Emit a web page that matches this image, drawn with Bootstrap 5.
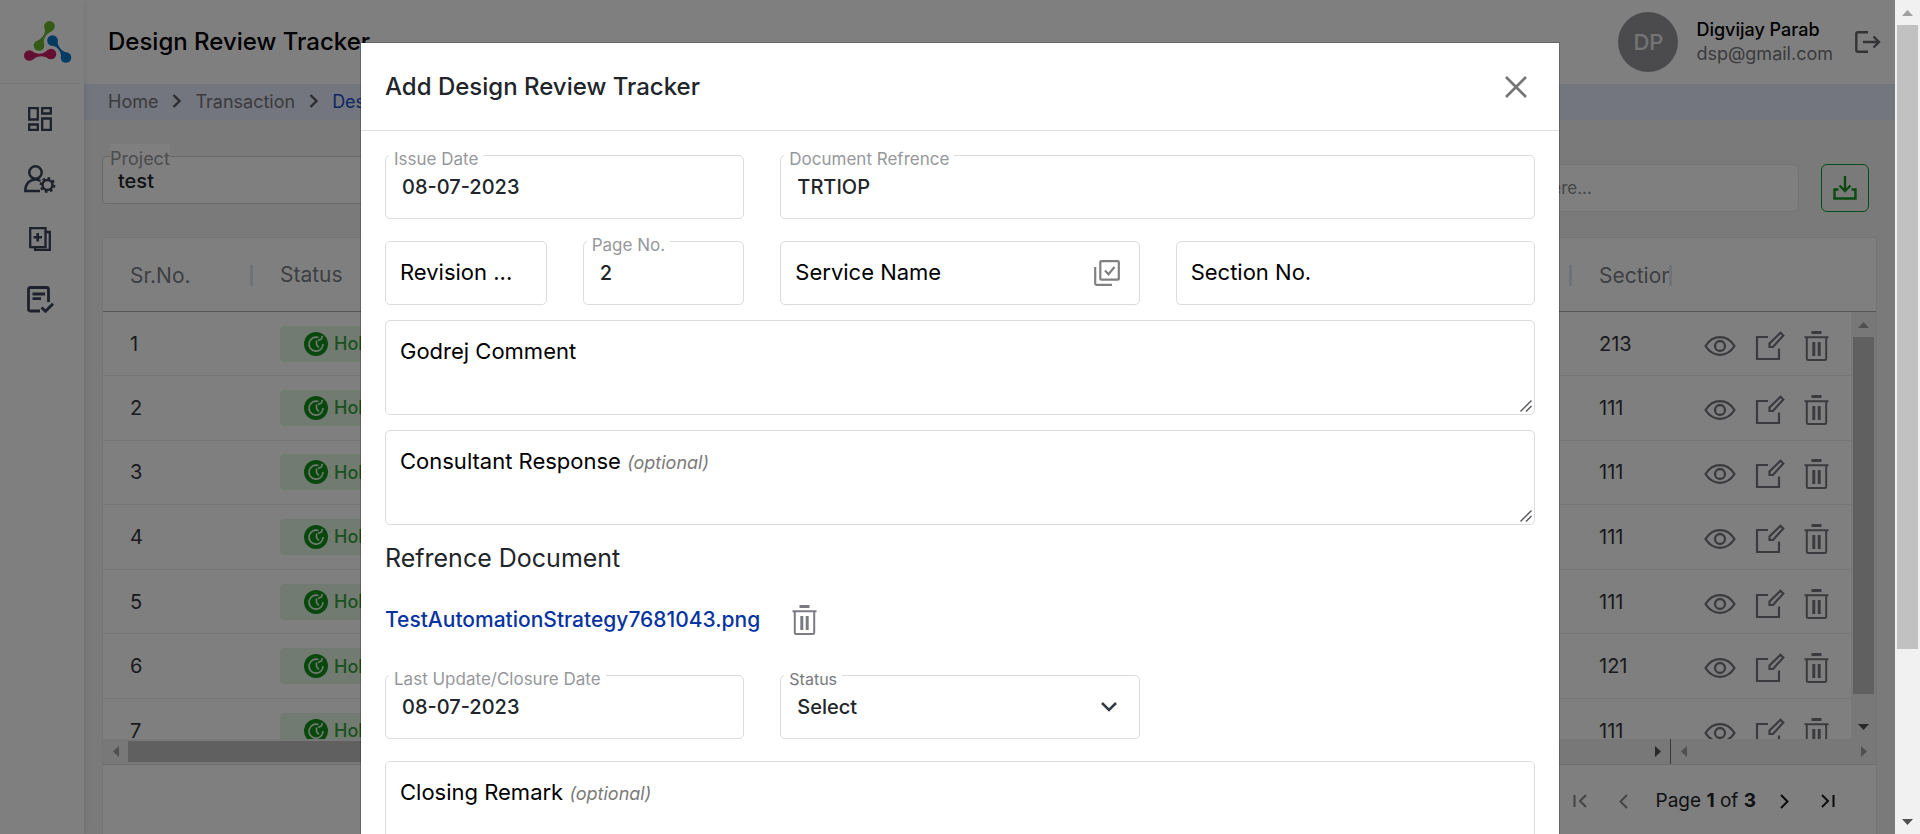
<!DOCTYPE html>
<html lang="en">
<head>
<meta charset="utf-8">
<meta name="viewport" content="width=device-width, initial-scale=1">
<title>Design Review Tracker</title>
<link href="https://cdn.jsdelivr.net/npm/bootstrap@5.3.0/dist/css/bootstrap.min.css" rel="stylesheet">
<style>
  body { font-family: Inter, "Open Sans", sans-serif; font-size: 20px; color: #212529; background: #f4f4f4; }
  svg { display: block; flex: none; }
  .icon-btn { border: 0; background: none; padding: 0; color: inherit; display: block; }

  /* sidebar */
  .side { width: 84px; background: #fff; color: #3b4256; box-shadow: 0 0 6px rgba(0,0,0,.12); z-index: 1; }
  .side-logo { width: 80px; height: 84px; padding: 21px 0 0 24px; border-bottom: 1px solid #ececec; }
  .side-nav { padding-top: 5px; }
  .side-link { height: 60px; width: 80px; color: inherit; }

  /* top bar */
  .topbar { height: 84px; background: #fff; padding: 0 14px 0 24px; }
  .page-title { font-size: 24px; font-weight: 500; color: #000; }
  .avatar { width: 60px; height: 60px; margin-right: 18px; background: #97979b; color: #e8e8ea; font-size: 22px; font-weight: 500; }
  .user-info { margin-right: 22px; }
  .user-name { font-size: 18px; line-height: 24px; font-weight: 500; color: #000; }
  .user-mail { font-size: 18px; line-height: 24px; color: #77777b; }
  .crumbs { height: 36px; background: #e6ebff; padding: 0 24px 2px; font-size: 18px; gap: 14px; color: #76767a; }
  .crumbs a { color: inherit; text-decoration: none; }
  .crumbs .current { color: #1c4fc4; }

  /* filter row */
  .tools { padding: 36px 26px 25px 18px; }
  .project { width: 360px; }
  .project select { height: 48px; font-size: 20px; border: 1px solid #d0d0d0; padding: 2px 15px 0; font-weight: 500; border-radius: 4px; }
  .project label { position: absolute; left: 8px; top: -12px; background: #fff; font-size: 18px; line-height: 30px; color: #98989c; }
  .search { width: 360px; height: 48px; font-size: 17px; border: 1px solid #e8e8e8; border-radius: 6px; padding-left: 40px; }
  .search::placeholder { color: #8c8c90; }
  .btn-export { width: 48px; height: 48px; margin-left: 22px; border: 1px solid #0b9a3c; border-radius: 6px; color: #14941d; background: none; }

  /* grid card */
  .grid-card { margin: 0 18px; background: #fff; border: 1px solid #e8e8e8; }
  .grid-table { table-layout: fixed; width: 100%; margin: 0; border-collapse: collapse; }
  .grid-head { height: 74px; border-bottom: 1px solid #aeaeb2; }
  .grid-head th { height: 74px; padding: 0 0 0 27px; font-size: 21px; font-weight: 400; color: #7d7f86; white-space: nowrap; }
  .head-cell { border-right: 3px solid #dfe5f0; line-height: 21px; overflow: hidden; }
  .grid-body { height: 427px; overflow: hidden; }
  .grid-rows { height: 645px; }
  .grid-rows td { padding: 0 0 0 27px; border-bottom: 1px solid #ececec; color: #34343a; }
  .state { display: flex; width: 140px; height: 36px; background: #e2f6e2; border-radius: 4px; color: #35a33a; font-size: 18px; font-weight: 500; padding-left: 24px; gap: 6px; }
  .row-actions { color: #77777e; gap: 19px; padding: 4px 0 0 5px; }
  .sb-v { width: 25px; background: #f1f1f1; padding: 0 2px; }
  .sb-h { height: 25px; background: #f1f1f1; border-bottom: 1px solid #dcdcdc; box-sizing: content-box; }
  .thumb { background: #c1c1c1; }
  .arrow-box { height: 25px; width: 25px; display: flex; align-items: center; justify-content: center; flex: none; }
  .pager { height: 72px; padding-right: 41px; font-size: 19px; }

  /* window scrollbar */
  .win-sb { width: 25px; background: #f1f1f1; }
  .win-sb .thumb { width: 21px; height: 624px; }

  /* dialog */
  .dim { position: absolute; inset: 0; background: rgba(0,0,0,.5); z-index: 5; }
  .modal { overflow: hidden; z-index: 10; }
  .modal-dialog { max-width: 1200px; margin: 42px auto 0; }
  .modal-content { border-radius: 0; border: 1px solid rgba(0,0,0,.2); background-clip: padding-box; }
  .modal-header { height: 88px; padding: 0 31px 0 24px; border-color: #dee2e6; border-radius: 0; }
  .modal-title { font-size: 24px; font-weight: 500; }
  .modal-body { padding: 24px; }
  .modal-body .row { --bs-gutter-x: 36px; margin-bottom: 22px; }
  .modal-body .gap-area { margin-bottom: 15px; }
  .field { position: relative; }
  .field .form-control, .field .form-select { height: 64px; border: 1px solid #dcdcde; border-radius: 5px; font-size: 20px; font-weight: 500; padding: 0 16px; color: #212529; background-color: #fff; }
  .field textarea.form-control { height: 95px; padding: 16px; resize: none; display: block; }
  .field .form-select { background-image: none; }
  .field label { position: absolute; background: #fff; pointer-events: none; white-space: nowrap; }
  .field .lbl-up { left: 4px; top: -8px; padding: 0 5px; line-height: 24px; font-size: 17px; color: #96989c; }
  .field .lbl-select { font-size: 16px; color: #77797d; }
  .field .lbl-in { left: 15px; top: 16px; line-height: 30px; font-size: 22px; color: #000; }
  .field .lbl-in em { font-size: 18px; color: #7a7a7a; }
  .field .end-icon { position: absolute; right: 20px; top: 0; height: 100%; display: flex; align-items: center; color: #808080; }
  .field .grip { position: absolute; right: 3px; bottom: 3px; }
  .sub-title { font-size: 25px; line-height: 30px; margin: 18px 0 0; font-weight: 400; }
  .file-row { height: 36px; margin: 29px 0 37px; gap: 32px; color: #7b7b83; }
  .file-link { color: #0833a2; text-decoration: none; font-size: 21px; font-weight: 500; }
</style>
</head>
<body>
<svg width="0" height="0" class="position-absolute" aria-hidden="true">
  <symbol id="i-eye" viewBox="0 0 32 20"><g fill="none" stroke="currentColor" stroke-width="2.300"><path d="M1.500 10C5 4.500 10 1.200 16 1.200S27 4.500 30.500 10C27 15.500 22 18.800 16 18.800S5 15.500 1.500 10z"/><circle cx="16" cy="10" r="5"/></g></symbol>
  <symbol id="i-edit" viewBox="0 0 30 30"><g fill="none" stroke="currentColor" stroke-width="2.200"><path d="M13 6H2v22H24V17.500"/><path d="M14.500 16v-3.500L25.500 1.700l2.800 2.800L18 16z"/></g></symbol>
  <symbol id="i-trash" viewBox="0 0 25 30"><g fill="none" stroke="currentColor" stroke-width="2"><path d="M7.500 1.500h10" stroke-width="3"/><path d="M.5 6.200h24M2.800 6.500V27.500q0 1.500 1.500 1.500h16.400q1.500 0 1.500-1.500V6.500"/><path d="M9.800 11v14M15.200 11v14" stroke-width="3"/></g></symbol>
  <symbol id="i-hold" viewBox="0 0 24 24"><circle cx="12" cy="12" r="12" fill="#10901a"/><g fill="none" stroke="#e2f6e2" stroke-width="1.600"><path d="M14.500 5.600A7 7 0 1 0 19 12"/><path d="M18.200 3.800 17.500 7l-3.400 1.500"/><path d="M12.500 8.500v4l2.300 3"/></g></symbol>
</svg>

<div class="d-flex vh-100 overflow-hidden">
  <div class="position-relative d-flex flex-grow-1 overflow-hidden">
    <nav class="side d-flex flex-column flex-shrink-0">
      <a href="#" class="side-logo" aria-label="Home">
        <svg width="48" height="43" viewBox="0 0 48 43">
          <g fill="#6bb52c"><circle cx="25.500" cy="5.300" r="5.300"/><circle cx="15" cy="24.500" r="5.300"/><path d="M20.500 7c1.500 5-1 9-6.500 12.500l6 3C19 17 22.500 12.500 28 10z"/></g>
          <g fill="#0076c8"><circle cx="28.500" cy="19.500" r="5.300"/><circle cx="42" cy="36.500" r="5.300"/><path d="M33.500 18c-1 5 3 12 9 13.500l-5.500 5.500c1-6-4-12-9.500-12.500z"/></g>
          <g fill="#c81e64"><circle cx="5.300" cy="34.500" r="5.300"/><circle cx="27" cy="33" r="5.300"/><path d="M8 30.200c5 3.600 11 3.200 16-1.200l1 9c-5-3.800-11-3.600-16 .6z"/></g>
        </svg>
      </a>
      <div class="side-nav">
        <a href="#" class="side-link d-flex align-items-center justify-content-center" aria-label="Dashboard"><svg width="24" height="24" viewBox="0 0 24 24" fill="none" stroke="currentColor" stroke-width="2.300"><path d="M1.200 1.200h8.600v11.300H1.200zM14.200 1.200h8.600v5.300h-8.600zM1.200 17.500h8.600v5.300H1.200zM14.200 11.500h8.600v11.300h-8.600z"/></svg></a>
        <a href="#" class="side-link d-flex align-items-center justify-content-center" aria-label="Users"><svg width="32" height="28" viewBox="0 0 32 28" fill="none" stroke="currentColor" stroke-width="2.500"><circle cx="11.500" cy="7.500" r="6.200"/><path d="M16 26H1.300c0-7 4-11.500 10.200-11.500 2 0 3.500.5 5 1.500"/><circle cx="23.500" cy="20" r="5"/><circle cx="23.500" cy="20" r="6.900" stroke-width="2" stroke-dasharray="2.700 2.700"/></svg></a>
        <a href="#" class="side-link d-flex align-items-center justify-content-center" aria-label="Add records"><svg width="22" height="24" viewBox="0 0 22 24" fill="none" stroke="currentColor" stroke-width="2.300"><path d="M1.200 1.200h15.300v19H1.200zM17 5h3.800v17.800H6V20"/><path d="M8.700 6v8.500M4.500 10.200H13" stroke-width="2.600"/></svg></a>
        <a href="#" class="side-link d-flex align-items-center justify-content-center" aria-label="Reviews"><svg width="27" height="27" viewBox="0 0 27 27" fill="none" stroke="currentColor" stroke-width="2.800"><path d="M13 25H3.500Q1.500 25 1.500 23V3.500Q1.500 1.500 3.500 1.500h16q2 0 2 2V16M5.500 8h12.500M5.500 12.700H14M14.500 21.500l4 3.800 7.500-7.500"/></svg></a>
      </div>
    </nav>

    <main class="flex-grow-1 overflow-hidden">
      <header class="topbar d-flex align-items-center">
        <h1 class="page-title mb-0 me-auto">Design Review Tracker</h1>
        <div class="avatar rounded-circle d-flex align-items-center justify-content-center">DP</div>
        <div class="user-info"><div class="user-name">Digvijay Parab</div><div class="user-mail">dsp@gmail.com</div></div>
        <button class="icon-btn" aria-label="Log out"><svg width="26" height="22" viewBox="0 0 26 22" fill="none" stroke="#66666a" stroke-width="2.400"><path d="M13 1.200H3Q1.300 1.200 1.300 3v16q0 1.800 1.700 1.800h10M8 11h16M18.500 5.500 24 11l-5.500 5.500"/></svg></button>
      </header>
      <nav class="crumbs d-flex align-items-center" aria-label="Breadcrumb">
        <a href="#">Home</a>
        <svg width="9" height="14" viewBox="0 0 9 14" fill="none" stroke="#5c5c60" stroke-width="2.400"><path d="m1.500 1 6 6-6 6"/></svg>
        <a href="#">Transaction</a>
        <svg width="9" height="14" viewBox="0 0 9 14" fill="none" stroke="#5c5c60" stroke-width="2.400"><path d="m1.500 1 6 6-6 6"/></svg>
        <a href="#" class="current">Design Review Tracker</a>
      </nav>

      <div class="tools d-flex align-items-start">
        <div class="project position-relative me-auto">
          <select id="project" class="form-select"><option>test</option></select>
          <label for="project">Project</label>
        </div>
        <input class="search form-control mt-2" type="search" placeholder="Search here..." aria-label="Search">
        <button class="btn-export icon-btn d-flex align-items-center justify-content-center mt-2" aria-label="Export"><svg width="24" height="24" viewBox="0 0 24 24" fill="none" stroke="currentColor" stroke-width="2.400"><path d="M5.500 13.500H1.500V22.500h21v-9h-4M12 0v15M6.500 9.500 12 15l5.500-5.500"/></svg></button>
      </div>

      <section class="grid-card">
        <div class="grid-head">
          <table class="grid-table">
            <colgroup><col style="width:150px"><col style="width:180px"><col><col style="width:100px"><col style="width:204px"></colgroup>
            <tr><th><div class="head-cell">Sr.No.</div></th><th>Status</th><th><div class="head-cell">&nbsp;</div></th><th><div class="head-cell">Section No.</div></th><th></th></tr>
          </table>
        </div>
        <div class="grid-body d-flex">
          <div class="flex-grow-1">
            <table class="grid-table grid-rows">
              <colgroup><col style="width:150px"><col style="width:180px"><col><col style="width:100px"><col style="width:179px"></colgroup>
              <tbody id="rows"></tbody>
            </table>
          </div>
          <div class="sb-v d-flex flex-column align-items-center">
            <div class="arrow-box"><svg width="11" height="6"><path d="M0 6 5.500 0 11 6z" fill="#a0a0a0"/></svg></div>
            <div class="thumb flex-grow-1 w-100 mb-3"></div>
            <div class="arrow-box mt-1"><svg width="11" height="6"><path d="M0 0h11L5.500 6z" fill="#505050"/></svg></div>
          </div>
        </div>
        <div class="sb-h d-flex">
          <div class="arrow-box"><svg width="6" height="11"><path d="M6 0v11L0 5.500z" fill="#a0a0a0"/></svg></div>
          <div class="thumb my-auto" style="width:52%;height:21px"></div>
          <div class="arrow-box ms-auto"><svg width="6" height="11"><path d="M0 0v11l6-5.500z" fill="#505050"/></svg></div>
          <div class="d-flex justify-content-between border-start border-secondary" style="width:206px">
            <div class="arrow-box"><svg width="6" height="11"><path d="M6 0v11L0 5.500z" fill="#a0a0a0"/></svg></div>
            <div class="arrow-box"><svg width="6" height="11"><path d="M0 0v11l6-5.500z" fill="#a0a0a0"/></svg></div>
          </div>
        </div>
        <div class="pager d-flex align-items-center justify-content-end">
          <button class="icon-btn me-4" aria-label="First page"><svg width="14" height="14" viewBox="0 0 14 14" fill="none" stroke="#88888c" stroke-width="2"><path d="M1.500 1v12M13 1 7 7l6 6"/></svg></button>
          <button class="icon-btn ms-2 me-4" aria-label="Previous page"><svg width="9" height="15" viewBox="0 0 9 15" fill="none" stroke="#88888c" stroke-width="2"><path d="m8 1-6.500 6.500L8 14"/></svg></button>
          <span class="ms-1">Page <b>1</b> of <b>3</b></span>
          <button class="icon-btn ms-4 me-4" aria-label="Next page"><svg width="9" height="15" viewBox="0 0 9 15" fill="none" stroke="#18181c" stroke-width="2"><path d="m1 1 6.500 6.500L1 14"/></svg></button>
          <button class="icon-btn ms-2" aria-label="Last page"><svg width="14" height="14" viewBox="0 0 14 14" fill="none" stroke="#18181c" stroke-width="2"><path d="M12.500 1v12M1 1l6 6-6 6"/></svg></button>
        </div>
      </section>
    </main>
    <div class="dim"></div>
  </div>

  <div class="win-sb d-flex flex-column align-items-center flex-shrink-0">
    <div class="arrow-box"><svg width="11" height="6"><path d="M0 6 5.500 0 11 6z" fill="#a0a0a0"/></svg></div>
    <div class="thumb"></div>
    <div class="arrow-box mt-auto"><svg width="11" height="6"><path d="M0 0h11L5.500 6z" fill="#505050"/></svg></div>
  </div>
</div>

<div class="modal d-block" role="dialog" aria-labelledby="dlgTitle">
  <div class="modal-dialog">
    <form class="modal-content">
      <div class="modal-header">
        <h2 class="modal-title" id="dlgTitle">Add Design Review Tracker</h2>
        <button type="button" class="icon-btn" aria-label="Close"><svg width="24" height="24" viewBox="0 0 24 24" fill="none" stroke="#757575" stroke-width="2.600"><path d="m2 2 20 20M22 2 2 22"/></svg></button>
      </div>
      <div class="modal-body">
        <div class="row">
          <div class="col-4"><div class="field"><input id="issue" class="form-control" value="08-07-2023"><label class="lbl-up" for="issue">Issue Date</label></div></div>
          <div class="col-8"><div class="field"><input id="docref" class="form-control" value="TRTIOP"><label class="lbl-up" for="docref">Document Refrence</label></div></div>
        </div>
        <div class="row gap-area">
          <div class="col-2"><div class="field"><input id="rev" class="form-control"><label class="lbl-in" for="rev">Revision ...</label></div></div>
          <div class="col-2"><div class="field"><input id="pg" class="form-control" value="2"><label class="lbl-up" for="pg">Page No.</label></div></div>
          <div class="col-4"><div class="field"><input id="service" class="form-control"><label class="lbl-in" for="service">Service Name</label>
            <span class="end-icon"><svg width="26" height="26" viewBox="0 0 26 26" fill="none" stroke="currentColor" stroke-width="2.200"><rect x="6.300" y="1.200" width="18.500" height="18.500" rx="1"/><path d="M1.200 7v16.500q0 1.300 1.300 1.300H18M11 10.500l3.500 3.800 6-7.300"/></svg></span></div></div>
          <div class="col-4"><div class="field"><input id="section" class="form-control"><label class="lbl-in" for="section">Section No.</label></div></div>
        </div>
        <div class="field gap-area"><textarea id="comment" class="form-control"></textarea><label class="lbl-in" for="comment">Godrej Comment</label>
          <svg class="grip" width="12" height="12" viewBox="0 0 12 12" stroke="#55555a" stroke-width="1.400"><path d="M.5 11.500 11.500.5M6 11.500 11.500 6"/></svg></div>
        <div class="field"><textarea id="response" class="form-control"></textarea><label class="lbl-in" for="response">Consultant Response <em>(optional)</em></label>
          <svg class="grip" width="12" height="12" viewBox="0 0 12 12" stroke="#55555a" stroke-width="1.400"><path d="M.5 11.500 11.500.5M6 11.500 11.500 6"/></svg></div>
        <h3 class="sub-title">Refrence Document</h3>
        <div class="file-row d-flex align-items-center">
          <a class="file-link" href="#">TestAutomationStrategy7681043.png</a>
          <button type="button" class="icon-btn" aria-label="Delete file"><svg width="25" height="30"><use href="#i-trash"/></svg></button>
        </div>
        <div class="row">
          <div class="col-4"><div class="field"><input id="closure" class="form-control" value="08-07-2023"><label class="lbl-up" for="closure">Last Update/Closure Date</label></div></div>
          <div class="col-4"><div class="field"><select id="status" class="form-select"><option>Select</option></select><label class="lbl-up lbl-select" for="status">Status</label>
            <span class="end-icon pe-none"><svg width="20" height="12" viewBox="0 0 20 12" fill="none" stroke="#343a40" stroke-width="2.500"><path d="m2 2 7 7 7-7"/></svg></span></div></div>
        </div>
        <div class="field"><textarea id="remark" class="form-control"></textarea><label class="lbl-in" for="remark">Closing Remark <em>(optional)</em></label></div>
      </div>
    </form>
  </div>
</div>

<script src="https://cdn.jsdelivr.net/npm/bootstrap@5.3.0/dist/js/bootstrap.bundle.min.js"></script>
<script>
  const sections = ["213", "111", "111", "111", "111", "121", "111", "111", "111", "111"];
  const icon = (name, w, h, label) => `<button class="icon-btn" aria-label="${label}"><svg width="${w}" height="${h}"><use href="#i-${name}"/></svg></button>`;
  document.getElementById("rows").innerHTML = sections.map((s, i) => `<tr>
    <td>${i + 1}</td>
    <td><span class="state align-items-center"><svg width="24" height="24"><use href="#i-hold"/></svg>Hold</span></td>
    <td></td><td>${s}</td>
    <td><div class="row-actions d-flex align-items-center">${icon("eye", 32, 20, "View")}${icon("edit", 30, 30, "Edit")}${icon("trash", 25, 30, "Delete")}</div></td>
  </tr>`).join("");
</script>
</body>
</html>
